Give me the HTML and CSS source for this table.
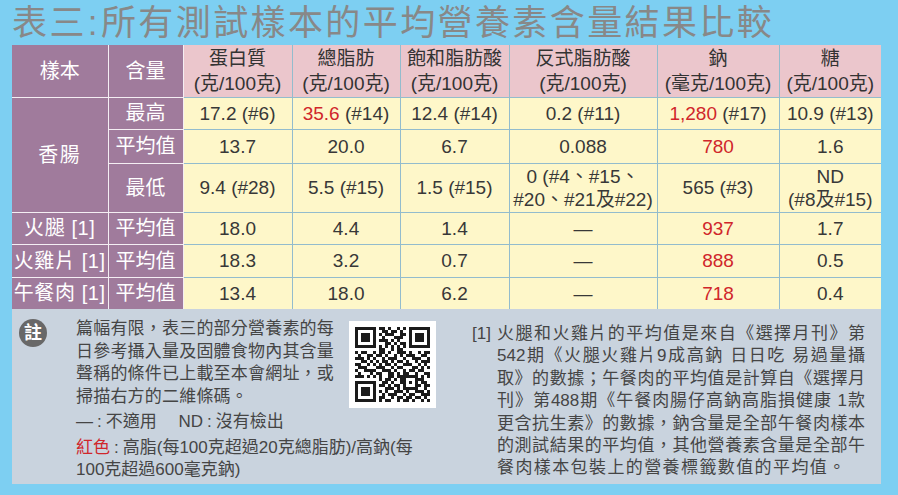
FILE: index.html
```html
<!DOCTYPE html>
<html lang="zh-Hant">
<head>
<meta charset="utf-8">
<title>表三：所有測試樣本的平均營養素含量結果比較</title>
<link rel="stylesheet" href="styles.css">
</head>
<body>
<div class="page">
  <h1 class="title">表三<span class="t-colon">:</span>所有測試樣本的平均營養素含量結果比較</h1>
  <table class="nutri">
    <colgroup>
      <col class="c1"><col class="c2"><col class="c3"><col class="c4"><col class="c5"><col class="c6"><col class="c7"><col class="c8">
    </colgroup>
    <thead>
      <tr class="h-head">
        <th class="lab">樣本</th>
        <th class="lab">含量</th>
        <th class="hd">蛋白質<br>(克/100克)</th>
        <th class="hd">總脂肪<br>(克/100克)</th>
        <th class="hd">飽和脂肪酸<br>(克/100克)</th>
        <th class="hd">反式脂肪酸<br>(克/100克)</th>
        <th class="hd">鈉<br>(毫克/100克)</th>
        <th class="hd">糖<br>(克/100克)</th>
      </tr>
    </thead>
    <tbody>
      <tr class="h-max">
        <th class="lab lab-wide" rowspan="3">香腸</th>
        <th class="lab">最高</th>
        <td>17.2 (#6)</td>
        <td><span class="red">35.6</span> (#14)</td>
        <td>12.4 (#14)</td>
        <td>0.2 (#11)</td>
        <td><span class="red">1,280</span> (#17)</td>
        <td>10.9 (#13)</td>
      </tr>
      <tr class="h-avg">
        <th class="lab">平均值</th>
        <td>13.7</td>
        <td>20.0</td>
        <td>6.7</td>
        <td>0.088</td>
        <td><span class="red">780</span></td>
        <td>1.6</td>
      </tr>
      <tr class="h-min">
        <th class="lab">最低</th>
        <td>9.4 (#28)</td>
        <td>5.5 (#15)</td>
        <td>1.5 (#15)</td>
        <td>0 (#4、#15、<br>#20、#21及#22)</td>
        <td>565 (#3)</td>
        <td>ND<br>(#8及#15)</td>
      </tr>
      <tr class="h-row">
        <th class="lab lab-sp">火腿 [1]</th>
        <th class="lab">平均值</th>
        <td>18.0</td>
        <td>4.4</td>
        <td>1.4</td>
        <td>—</td>
        <td><span class="red">937</span></td>
        <td>1.7</td>
      </tr>
      <tr class="h-row2">
        <th class="lab lab-sp">火雞片 [1]</th>
        <th class="lab">平均值</th>
        <td>18.3</td>
        <td>3.2</td>
        <td>0.7</td>
        <td>—</td>
        <td><span class="red">888</span></td>
        <td>0.5</td>
      </tr>
      <tr class="h-row">
        <th class="lab lab-sp">午餐肉 [1]</th>
        <th class="lab">平均值</th>
        <td>13.4</td>
        <td>18.0</td>
        <td>6.2</td>
        <td>—</td>
        <td><span class="red">718</span></td>
        <td>0.4</td>
      </tr>
    </tbody>
  </table>

  <section class="note">
    <div class="badge">註</div>
    <div class="note-main">
      <p class="para1">
        <span class="ln">篇幅有限，表三的部分營養素的每</span>
        <span class="ln">日參考攝入量及固體食物內其含量</span>
        <span class="ln">聲稱的條件已上載至本會網址，或</span>
        <span class="ln">掃描右方的二維條碼。</span>
      </p>
      <div class="qr">
        <svg viewBox="0 0 25 25" width="75" height="75" shape-rendering="crispEdges" aria-label="二維條碼">
          <path fill="#1b1b1b" fill-rule="evenodd" d="M0 0h7v7h-7zM1 1v5h5v-5zM2 2h3v3h-3zM18 0h7v7h-7zM19 1v5h5v-5zM20 2h3v3h-3zM0 18h7v7h-7zM1 19v5h5v-5zM2 20h3v3h-3zM16 16h5v5h-5zM17 17v3h3v-3zM18 18h1v1h-1z"/>
          <path fill="#1b1b1b" d="M8 0h2v1h-2zM11 0h1v1h-1zM14 0h1v1h-1zM16 0h1v1h-1zM9 1h2v1h-2zM12 1h2v1h-2zM15 1h1v1h-1zM8 2h1v1h-1zM10 2h3v1h-3zM15 2h2v1h-2zM9 3h1v1h-1zM13 3h3v1h-3zM8 4h3v1h-3zM12 4h1v1h-1zM14 4h1v1h-1zM10 5h2v1h-2zM13 5h1v1h-1zM15 5h2v1h-2zM8 6h1v1h-1zM10 6h1v1h-1zM12 6h1v1h-1zM14 6h1v1h-1zM16 6h1v1h-1zM8 7h2v1h-2zM12 7h1v1h-1zM14 7h2v1h-2zM0 8h1v1h-1zM2 8h2v1h-2zM6 8h1v1h-1zM8 8h2v1h-2zM11 8h1v1h-1zM14 8h3v1h-3zM18 8h1v1h-1zM21 8h1v1h-1zM23 8h2v1h-2zM1 9h1v1h-1zM4 9h2v1h-2zM7 9h2v1h-2zM10 9h1v1h-1zM13 9h1v1h-1zM15 9h1v1h-1zM17 9h3v1h-3zM22 9h2v1h-2zM0 10h3v1h-3zM4 10h1v1h-1zM6 10h1v1h-1zM9 10h1v1h-1zM11 10h3v1h-3zM16 10h1v1h-1zM19 10h3v1h-3zM24 10h1v1h-1zM2 11h2v1h-2zM5 11h1v1h-1zM7 11h1v1h-1zM9 11h2v1h-2zM12 11h1v1h-1zM14 11h2v1h-2zM17 11h1v1h-1zM20 11h1v1h-1zM22 11h3v1h-3zM0 12h2v1h-2zM4 12h1v1h-1zM6 12h1v1h-1zM8 12h1v1h-1zM10 12h2v1h-2zM13 12h1v1h-1zM16 12h3v1h-3zM21 12h1v1h-1zM23 12h1v1h-1zM1 13h3v1h-3zM7 13h3v1h-3zM12 13h1v1h-1zM14 13h2v1h-2zM19 13h2v1h-2zM22 13h1v1h-1zM24 13h1v1h-1zM0 14h1v1h-1zM3 14h4v1h-4zM9 14h3v1h-3zM13 14h1v1h-1zM16 14h1v1h-1zM18 14h2v1h-2zM21 14h2v1h-2zM1 15h1v1h-1zM5 15h1v1h-1zM7 15h2v1h-2zM11 15h2v1h-2zM14 15h1v1h-1zM16 15h2v1h-2zM20 15h1v1h-1zM23 15h2v1h-2zM0 16h3v1h-3zM4 16h1v1h-1zM6 16h1v1h-1zM8 16h1v1h-1zM11 16h2v1h-2zM14 16h2v1h-2zM22 16h1v1h-1zM24 16h1v1h-1zM8 17h1v1h-1zM10 17h2v1h-2zM13 17h1v1h-1zM15 17h1v1h-1zM21 17h2v1h-2zM9 18h2v1h-2zM12 18h1v1h-1zM15 18h1v1h-1zM22 18h2v1h-2zM8 19h2v1h-2zM11 19h1v1h-1zM13 19h2v1h-2zM21 19h1v1h-1zM23 19h2v1h-2zM10 20h3v1h-3zM14 20h1v1h-1zM23 20h1v1h-1zM8 21h1v1h-1zM10 21h1v1h-1zM13 21h3v1h-3zM17 21h1v1h-1zM20 21h3v1h-3zM24 21h1v1h-1zM9 22h1v1h-1zM11 22h3v1h-3zM16 22h1v1h-1zM18 22h2v1h-2zM22 22h3v1h-3zM8 23h2v1h-2zM12 23h1v1h-1zM14 23h2v1h-2zM17 23h2v1h-2zM20 23h2v1h-2zM23 23h1v1h-1zM8 24h1v1h-1zM10 24h2v1h-2zM14 24h1v1h-1zM16 24h2v1h-2zM19 24h1v1h-1zM22 24h1v1h-1zM24 24h1v1h-1z"/>
        </svg>
      </div>
      <p class="na">—<span class="colon">:</span>不適用　 ND<span class="colon">:</span>沒有檢出</p>
      <p class="rednote"><span class="red">紅色</span><span class="colon">:</span>高脂(每100克超過20克總脂肪)/高鈉(每<br>100克超過600毫克鈉)</p>
    </div>
    <div class="note-ref">
      <span class="ref-mark">[1]</span>
      <p class="ref-text">
        <span class="ln">火腿和火雞片的平均值是來自《選擇月刊》第</span>
        <span class="ln">542期《火腿火雞片9成高鈉 日日吃 易過量攝</span>
        <span class="ln">取》的數據；午餐肉的平均值是計算自《選擇月</span>
        <span class="ln">刊》第488期《午餐肉腸仔高鈉高脂損健康 1款</span>
        <span class="ln">更含抗生素》的數據，鈉含量是全部午餐肉樣本</span>
        <span class="ln">的測試結果的平均值，其他營養素含量是全部午</span>
        <span class="ln last">餐肉樣本包裝上的營養標籤數值的平均值。</span>
      </p>
    </div>
  </section>
</div>
</body>
</html>
```

FILE: styles.css
```css
* { box-sizing: border-box; }

body {
  margin: 0;
  background: #7dcff2;
  font-family: "Liberation Sans", "Noto Sans CJK TC", sans-serif;
  color: #333;
}

.page {
  width: 898px;
  height: 495px;
  padding-left: 12px;
  overflow: hidden;
}

.title {
  margin: 0;
  height: 45px;
  padding-top: 1px;
  line-height: 44px;
  font-size: 35px;
  font-weight: 400;
  color: #888;
  letter-spacing: 2.4px;
  white-space: nowrap;
}

.t-colon { margin: 0 1px; }

.nutri {
  width: 869px;
  table-layout: fixed;
  border-collapse: collapse;
  border-style: hidden;
}

.c1 { width: 96px; }
.c2 { width: 75px; }
.c3 { width: 109px; }
.c4 { width: 108px; }
.c5 { width: 109px; }
.c6 { width: 148px; }
.c7 { width: 122px; }
.c8 { width: 102px; }

.nutri th,
.nutri td {
  padding: 0;
  text-align: center;
  vertical-align: middle;
  font-weight: 400;
  white-space: nowrap;
}

.nutri td {
  background: #fef7c9;
  border: 1px solid #93bccd;
  font-size: 19px;
  line-height: 23px;
  color: #383838;
}

.nutri th.hd {
  background: #ebc6cc;
  border: 1px solid #93bccd;
  font-size: 19px;
  line-height: 25px;
  color: #333;
}

.nutri th.lab {
  background: #a07b9c;
  border: 1px solid #f4eef3;
  color: #fff;
  font-size: 20px;
  line-height: 24px;
}

.nutri th.lab-wide { letter-spacing: 1.5px; }
.nutri th.lab-sp { letter-spacing: 0.6px; }

.h-head { height: 52px; }
.h-max { height: 32px; }
.h-avg { height: 34px; }
.h-min { height: 49px; }
.h-row { height: 32px; }
.h-row2 { height: 33px; }

.red { color: #d0262b; }

.note {
  display: flex;
  align-items: flex-start;
  width: 869px;
  height: 175px;
  background: #c9d3de;
  padding: 9px 0 0 7px;
  color: #454545;
  font-size: 17px;
}

.badge {
  flex: none;
  width: 28px;
  height: 28px;
  margin-top: 1px;
  border-radius: 50%;
  background: #686868;
  color: #fff;
  font-size: 18px;
  line-height: 28px;
  text-align: center;
  font-weight: 700;
}

.note-main {
  flex: none;
  width: 364px;
  margin-left: 29px;
  display: grid;
  grid-template-columns: 262px 87px;
  column-gap: 11px;
  align-items: start;
}

.note-main p { margin: 0; }

.para1 {
  line-height: 22.5px;
  letter-spacing: 0.2px;
}

.ln { display: block; white-space: nowrap; }

.qr {
  margin-top: 3px;
  width: 87px;
  height: 87px;
  padding: 6px;
  background: #fff;
}

.qr svg { display: block; }

.na {
  grid-column: 1 / -1;
  margin-top: 3px !important;
  line-height: 22px;
}

.rednote {
  grid-column: 1 / -1;
  margin-top: 4px !important;
  line-height: 22px;
}

.colon { margin: 0 4px; }

.note-ref {
  flex: none;
  display: flex;
  margin-left: 32px;
  margin-top: 5px;
}

.ref-mark {
  width: 25px;
  line-height: 22.4px;
}

.ref-text {
  margin: 0;
  width: 368px;
  line-height: 22.4px;
}

.ref-text .ln {
  text-align: justify;
  text-align-last: justify;
}

.ref-text .ln.last {
  text-align-last: auto;
  letter-spacing: 1.4px;
}
```
